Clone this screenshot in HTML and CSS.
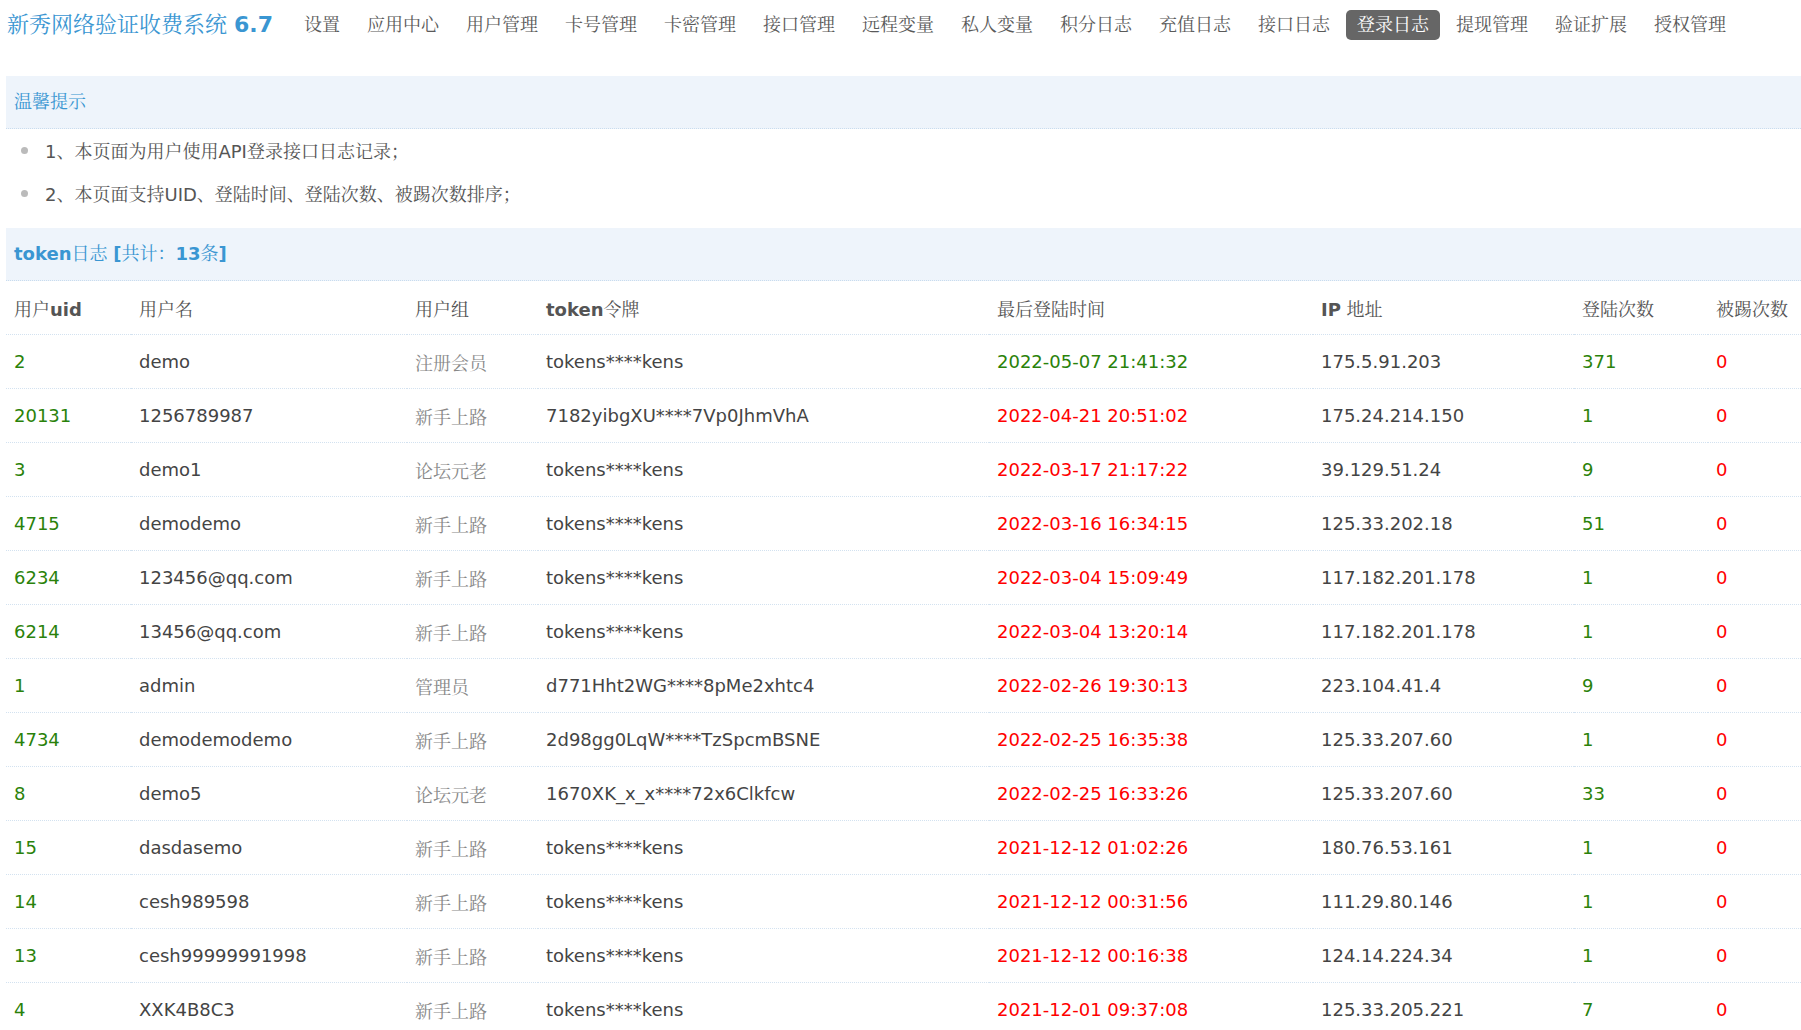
FILE: index.html
```html
<!DOCTYPE html>
<html lang="zh-CN">
<head>
  <meta charset="UTF-8" />
  <title>登录日志 - 新秀网络验证收费系统</title>
  <link rel="stylesheet" href="styles.css">
</head>
<body>
  <div class="topbar">
    <div class="brand">新秀网络验证收费系统 <b>6.7</b></div>
    <ul class="nav">
      <li><a href="#">设置</a></li>
      <li><a href="#">应用中心</a></li>
      <li><a href="#">用户管理</a></li>
      <li><a href="#">卡号管理</a></li>
      <li><a href="#">卡密管理</a></li>
      <li><a href="#">接口管理</a></li>
      <li><a href="#">远程变量</a></li>
      <li><a href="#">私人变量</a></li>
      <li><a href="#">积分日志</a></li>
      <li><a href="#">充值日志</a></li>
      <li><a href="#">接口日志</a></li>
      <li class="active"><a href="#">登录日志</a></li>
      <li><a href="#">提现管理</a></li>
      <li><a href="#">验证扩展</a></li>
      <li><a href="#">授权管理</a></li>
    </ul>
  </div>

  <div class="panel">
    <div class="panel-title">温馨提示</div>
    <ul class="tips">
      <li>1、本页面为用户使用API登录接口日志记录；</li>
      <li>2、本页面支持UID、登陆时间、登陆次数、被踢次数排序；</li>
    </ul>
  </div>

  <div class="panel">
    <div class="panel-title"><b>token</b>日志 <b>[</b>共计：<b>13</b>条<b>]</b></div>
    <table class="log-table">
      <colgroup>
        <col style="width: 125px">
        <col style="width: 276px">
        <col style="width: 131px">
        <col style="width: 451px">
        <col style="width: 324px">
        <col style="width: 261px">
        <col style="width: 134px">
        <col>
      </colgroup>
      <thead>
        <tr>
          <th>用户<b>uid</b></th>
          <th>用户名</th>
          <th>用户组</th>
          <th><b>token</b>令牌</th>
          <th>最后登陆时间</th>
          <th><b>IP</b> 地址</th>
          <th>登陆次数</th>
          <th>被踢次数</th>
        </tr>
      </thead>
      <tbody>
        <tr>
          <td class="ok">2</td><td>demo</td><td class="group">注册会员</td><td>tokens****kens</td>
          <td class="ok">2022-05-07 21:41:32</td><td>175.5.91.203</td><td class="ok">371</td><td class="bad">0</td>
        </tr>
        <tr>
          <td class="ok">20131</td><td>1256789987</td><td class="group">新手上路</td><td>7182yibgXU****7Vp0JhmVhA</td>
          <td class="bad">2022-04-21 20:51:02</td><td>175.24.214.150</td><td class="ok">1</td><td class="bad">0</td>
        </tr>
        <tr>
          <td class="ok">3</td><td>demo1</td><td class="group">论坛元老</td><td>tokens****kens</td>
          <td class="bad">2022-03-17 21:17:22</td><td>39.129.51.24</td><td class="ok">9</td><td class="bad">0</td>
        </tr>
        <tr>
          <td class="ok">4715</td><td>demodemo</td><td class="group">新手上路</td><td>tokens****kens</td>
          <td class="bad">2022-03-16 16:34:15</td><td>125.33.202.18</td><td class="ok">51</td><td class="bad">0</td>
        </tr>
        <tr>
          <td class="ok">6234</td><td>123456@qq.com</td><td class="group">新手上路</td><td>tokens****kens</td>
          <td class="bad">2022-03-04 15:09:49</td><td>117.182.201.178</td><td class="ok">1</td><td class="bad">0</td>
        </tr>
        <tr>
          <td class="ok">6214</td><td>13456@qq.com</td><td class="group">新手上路</td><td>tokens****kens</td>
          <td class="bad">2022-03-04 13:20:14</td><td>117.182.201.178</td><td class="ok">1</td><td class="bad">0</td>
        </tr>
        <tr>
          <td class="ok">1</td><td>admin</td><td class="group">管理员</td><td>d771Hht2WG****8pMe2xhtc4</td>
          <td class="bad">2022-02-26 19:30:13</td><td>223.104.41.4</td><td class="ok">9</td><td class="bad">0</td>
        </tr>
        <tr>
          <td class="ok">4734</td><td>demodemodemo</td><td class="group">新手上路</td><td>2d98gg0LqW****TzSpcmBSNE</td>
          <td class="bad">2022-02-25 16:35:38</td><td>125.33.207.60</td><td class="ok">1</td><td class="bad">0</td>
        </tr>
        <tr>
          <td class="ok">8</td><td>demo5</td><td class="group">论坛元老</td><td>1670XK_x_x****72x6Clkfcw</td>
          <td class="bad">2022-02-25 16:33:26</td><td>125.33.207.60</td><td class="ok">33</td><td class="bad">0</td>
        </tr>
        <tr>
          <td class="ok">15</td><td>dasdasemo</td><td class="group">新手上路</td><td>tokens****kens</td>
          <td class="bad">2021-12-12 01:02:26</td><td>180.76.53.161</td><td class="ok">1</td><td class="bad">0</td>
        </tr>
        <tr>
          <td class="ok">14</td><td>cesh989598</td><td class="group">新手上路</td><td>tokens****kens</td>
          <td class="bad">2021-12-12 00:31:56</td><td>111.29.80.146</td><td class="ok">1</td><td class="bad">0</td>
        </tr>
        <tr>
          <td class="ok">13</td><td>cesh99999991998</td><td class="group">新手上路</td><td>tokens****kens</td>
          <td class="bad">2021-12-12 00:16:38</td><td>124.14.224.34</td><td class="ok">1</td><td class="bad">0</td>
        </tr>
        <tr>
          <td class="ok">4</td><td>XXK4B8C3</td><td class="group">新手上路</td><td>tokens****kens</td>
          <td class="bad">2021-12-01 09:37:08</td><td>125.33.205.221</td><td class="ok">7</td><td class="bad">0</td>
        </tr>
      </tbody>
    </table>
  </div>
</body>
</html>
```

FILE: styles.css
```css
body {
  margin: 0;
  padding: 0 0 0 6px;
  font-family: "DejaVu Sans", "Noto Serif CJK SC", "Noto Sans CJK SC", sans-serif;
  font-size: 18px;
  color: #555;
  background: #fff;
}

.topbar {
  display: flex;
  align-items: center;
  padding-top: 10px;
  height: 30px;
}

.brand {
  flex: none;
  margin-left: 1px;
  font-size: 22px;
  line-height: 30px;
  color: #3a96d2;
  white-space: nowrap;
}

.brand b {
  font-weight: bold;
}

.nav {
  display: flex;
  list-style: none;
  margin: 0 0 0 20px;
  padding: 0;
}

.nav li {
  margin-right: 5px;
}

.nav a {
  display: block;
  padding: 0 11px;
  line-height: 30px;
  border-radius: 5px;
  color: #5a5a5a;
  text-decoration: none;
  white-space: nowrap;
}

.nav .active a {
  background: #666;
  color: #fff;
}

.topbar + .panel {
  margin-top: 36px;
}

.panel-title {
  height: 52px;
  line-height: 52px;
  padding-left: 8px;
  background: #eef4fb;
  border-bottom: 1px dotted #c9dcee;
  color: #3a96d2;
}

.panel-title b {
  font-weight: bold;
}

.tips {
  list-style: none;
  margin: 0;
  padding: 1px 0 12px 12px;
}

.tips li {
  line-height: 43px;
  padding-left: 3px;
}

.tips li::before {
  content: "";
  display: inline-block;
  width: 7px;
  height: 7px;
  margin-right: 17px;
  border-radius: 50%;
  background: #bbb;
  vertical-align: middle;
  position: relative;
  top: -3px;
}

.log-table {
  width: 100%;
  border-collapse: collapse;
  table-layout: fixed;
}

.log-table th,
.log-table td {
  height: 53px;
  padding: 0 8px;
  text-align: left;
  white-space: nowrap;
  border-bottom: 1px dotted #d3e2f0;
}

.log-table th {
  font-weight: normal;
  color: #555;
}

.log-table th b {
  font-weight: bold;
}

.log-table td {
  color: #444;
}

.log-table td.group {
  color: #888;
}

.log-table td.ok {
  color: #2a820a;
}

.log-table td.bad {
  color: #f00;
}
```
